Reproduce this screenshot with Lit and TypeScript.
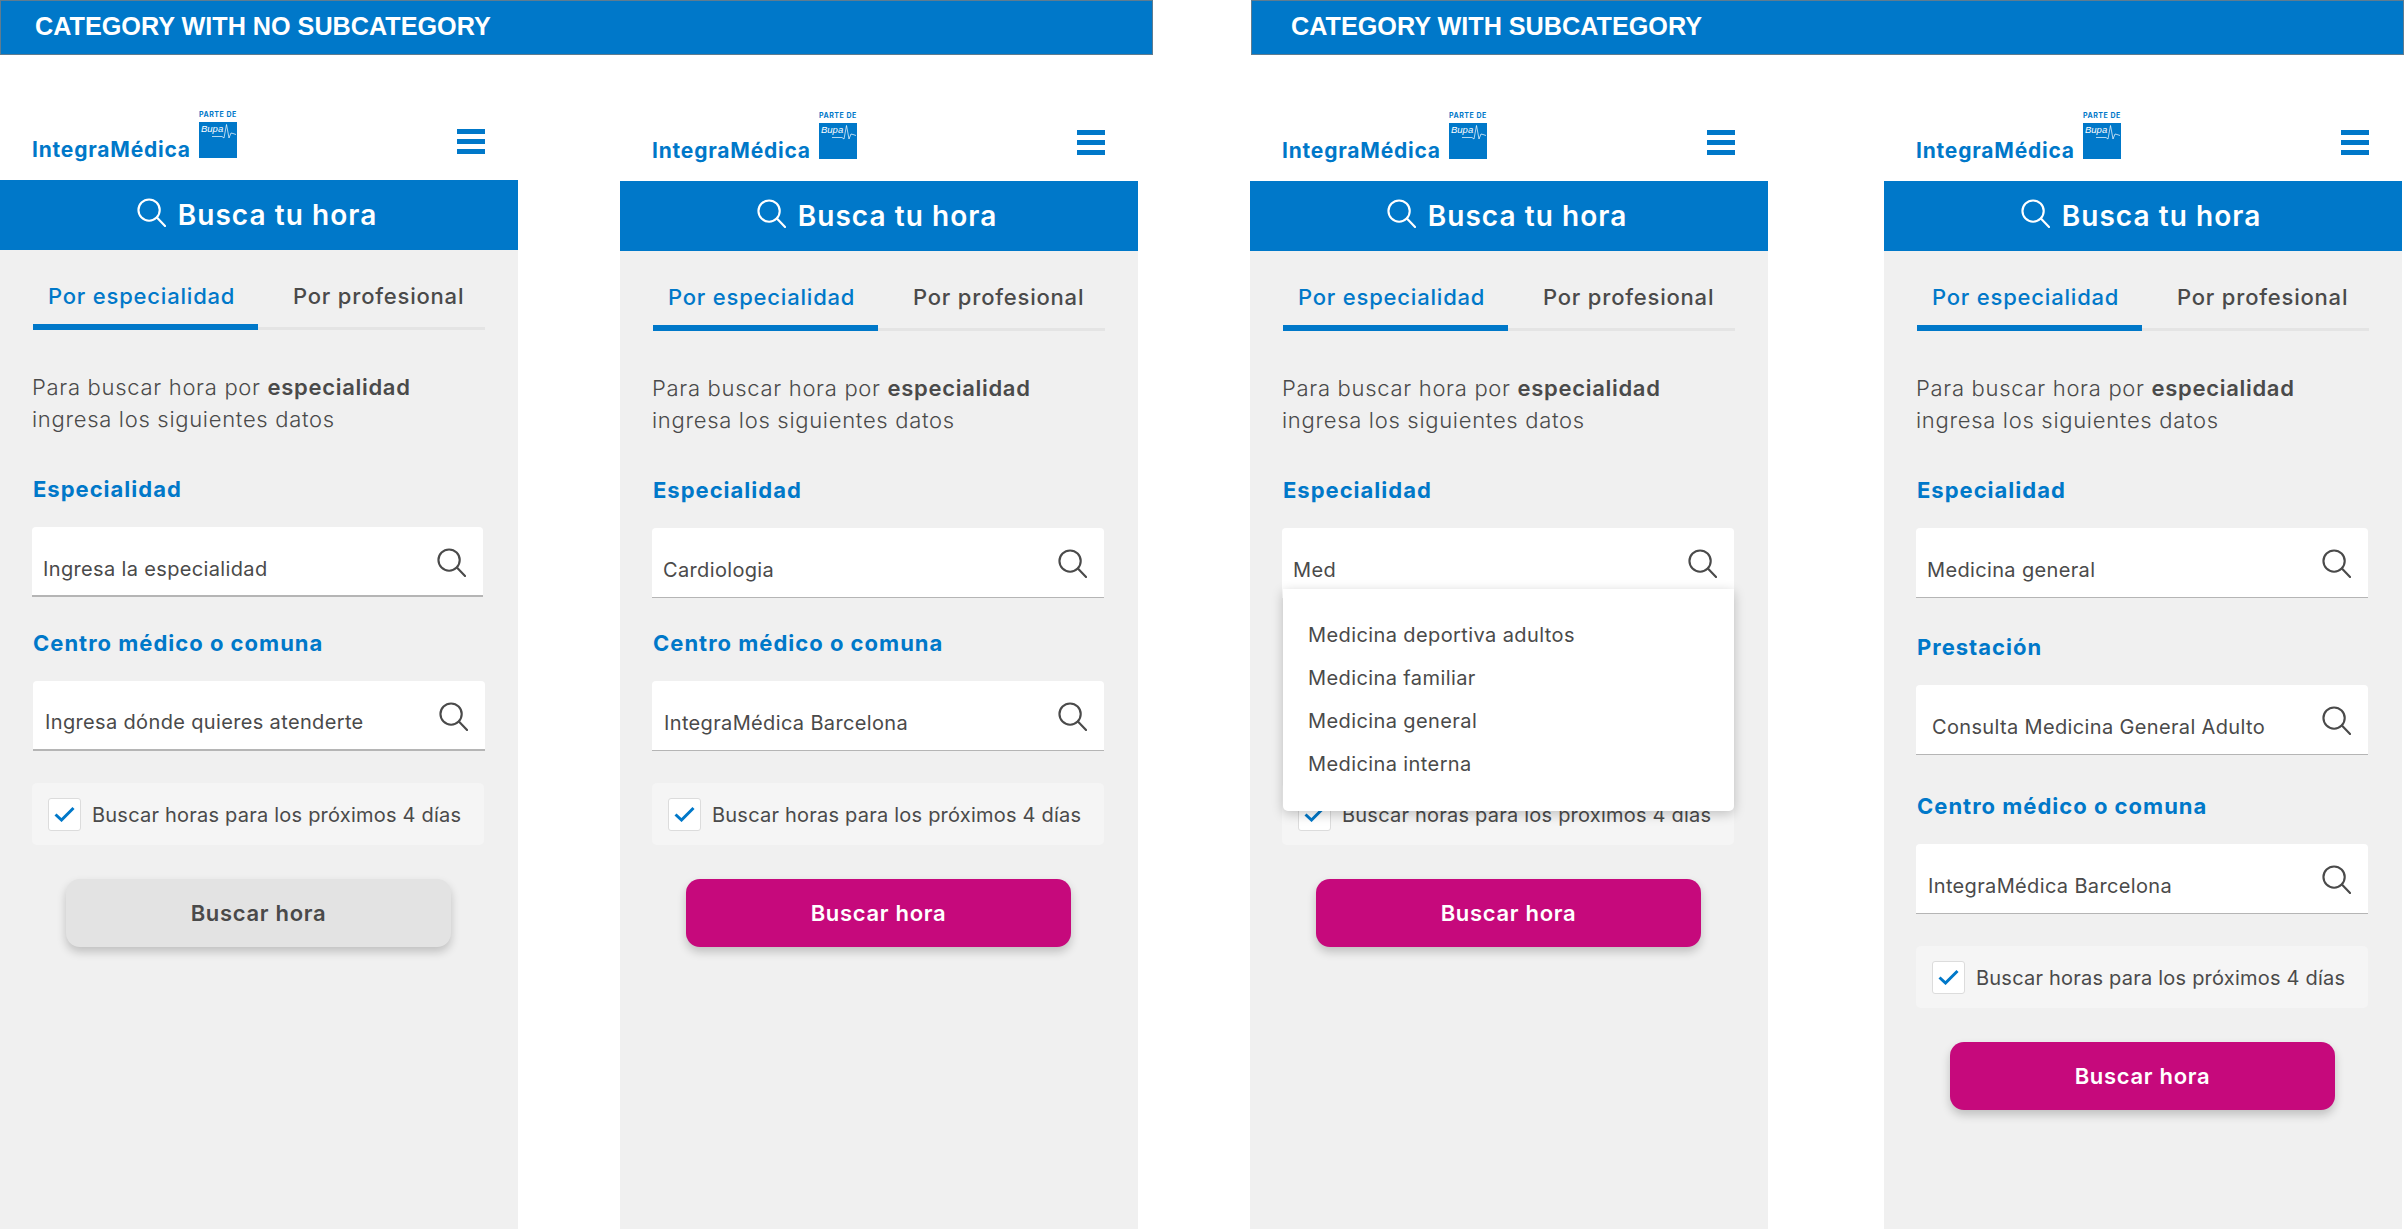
import { LitElement, html, css } from "lit";
import { customElement, property } from "lit/decorators.js";
import { classMap } from "lit/directives/class-map.js";

const lens = (cls: string) => html`<svg class=${cls} viewBox="0 0 30 30" fill="none" stroke="currentColor" stroke-width="2.2" stroke-linecap="round">
  <circle cx="12.5" cy="12.5" r="11"></circle><path d="M20.6 20.2 L29 29"></path></svg>`;

interface Field { label: string; value: string; cls?: string; ghost?: boolean }

@customElement("search-phone")
class SearchPhone extends LitElement {
  @property({ type: Array }) fields: Field[] = [];
  @property({ type: Boolean }) disabled = false;
  @property({ type: Boolean }) open = false;
  @property({ type: Boolean }) shifted = false;
  @property({ type: Boolean }) tall = false;

  static styles = css`
    :host { display: flex; flex-direction: column; width: 518px; font-family: Inter, "Open Sans", sans-serif; color: #4a4a4a; }
    .phone { display: flex; flex-direction: column; height: 100%; }
    .top { height: 125px; flex: none; display: flex; align-items: flex-end; justify-content: space-between; padding: 0 33px 0 32px; box-sizing: border-box; background: #fff; }
    .shifted .top { height: 126px; }
    .logo { display: flex; align-items: flex-end; gap: 8px; padding-bottom: 22px; color: #0078c9; }
    .wordmark { font-size: 21px; line-height: 24px; font-weight: 700; letter-spacing: 0.8px; margin-bottom: -4px; }
    .bupa { display: flex; flex-direction: column; align-items: center; width: 38px; }
    .parte { font-size: 7px; line-height: 8px; font-weight: 700; letter-spacing: .5px; margin-bottom: 3px; white-space: nowrap; }
    .square { display: block; width: 38px; height: 36px; }
    .burger { display: flex; flex-direction: column; gap: 5px; width: 28px; padding-bottom: 26px; }
    .burger span { height: 5px; background: #0078c9; }
    .hero { height: 70px; flex: none; background: #0078c9; color: #fff; display: flex; align-items: center; justify-content: center; gap: 12px; padding-right: 4px; }
    .hero-icon { width: 29px; height: 29px; margin-top: -5px; }
    .hero b { font-size: 28px; font-weight: 600; letter-spacing: 1.05px; }
    .body { flex: 1; background: #f0f0f0; padding: 0 33px 0 32px; display: flex; flex-direction: column; position: relative; }
    .tabs { height: 80px; flex: none; margin-left: 1px; display: grid; grid-template-columns: 225px 1fr; align-items: end; }
    .tab { display: flex; align-items: flex-start; font-size: 22px; line-height: 30px; height: 80px; box-sizing: border-box; font-weight: 500; letter-spacing: 0.8px; border-bottom: 3px solid #e4e4e4; padding: 31px 0 0 35px; }
    .tab.on { color: #0078c9; border-bottom: 6px solid #0078c9; padding-left: 15px; }
    .intro { margin: 41px 0 0; font-size: 22px; line-height: 32px; font-weight: 300; letter-spacing: 0.7px; }
    .intro b { font-weight: 600; }
    .label { font-size: 22px; line-height: 30px; font-weight: 700; letter-spacing: 1px; color: #0078c9; margin: 39px 0 0 1px; }
    .label.next { margin-top: 31px; }
    .shifted .label.next { margin-top: 30px; }
    .tall .label.n1 { margin-top: 34px; }
    .tall .label.n2 { margin-top: 36px; }
    .ghost { visibility: hidden; }
    .input { height: 70px; flex: none; margin: 23px 1px 0 0; background: #fff; border-radius: 4px 4px 0 0; border-bottom: 1px solid #b5b5b5; box-sizing: border-box; display: flex; align-items: flex-end; justify-content: space-between; padding: 0 17px 14px 11px; font-size: 20px; line-height: 26px; letter-spacing: .35px; }
    .disabled .input { border-bottom-width: 2px; padding-bottom: 13px; margin-right: 2px; }
    .input.near { padding-left: 12px; }
    .disabled .input.near { margin: 23px 0 0 1px; padding-bottom: 14px; }
    .input.plain { border-bottom-color: transparent; }
    .input.wide { padding-left: 16px; }
    .input-icon { width: 29px; height: 29px; align-self: flex-start; margin: 21px 0 0; flex: none; }
    .check { margin: 32px 1px 0 0; height: 62px; flex: none; background: #f5f5f5; border-radius: 5px; display: flex; align-items: center; gap: 11px; padding-left: 16px; font-size: 20px; letter-spacing: .22px; }
    .check-text { margin-top: 2px; }
    .box { width: 33px; height: 33px; background: #fff; border: 1.5px solid #dcdcdc; border-radius: 3px; box-sizing: border-box; display: flex; align-items: center; justify-content: center; }
    .box svg { width: 21px; height: 16px; }
    .cta { margin: 34px 0 0 34px; width: 385px; height: 68px; flex: none; border-radius: 14px; background: #c6097c; color: #fff; font-size: 22px; font-weight: 600; letter-spacing: .7px; box-shadow: 0 5px 10px rgba(0,0,0,.2); display: flex; align-items: center; justify-content: center; }
    .cta.off { background: #e3e3e3; color: #4a4a4a; }
    .menu { position: absolute; left: 33px; top: 338px; width: 451px; height: 222px; background: #fff; border-radius: 0 0 5px 5px; box-shadow: 0 3px 12px rgba(0,0,0,.22); box-sizing: border-box; padding: 25px 0 0 25px; font-size: 20px; line-height: 43px; letter-spacing: .4px; }
  `;

  render() {
    return html`<div class=${classMap({ phone: true, shifted: this.shifted, tall: this.tall, disabled: this.disabled })}>
      <div class="top">
        <div class="logo">
          <span class="wordmark">IntegraMédica</span>
          <div class="bupa">
            <span class="parte">PARTE DE</span>
            <svg class="square" viewBox="0 0 38 36">
              <rect width="38" height="36" fill="#0078c9"></rect>
              <text x="2" y="10" font-size="9.5" font-style="italic" font-family="Liberation Sans" fill="#fff">Bupa</text>
              <path d="M13 14.5H23L25 16 27.5 2.5 30 16 32 11 34 11.5 37 12.5" fill="none" stroke="#fff" stroke-width=".7"></path>
            </svg>
          </div>
        </div>
        <div class="burger"><span></span><span></span><span></span></div>
      </div>
      <div class="hero">${lens("hero-icon")}<b>Busca tu hora</b></div>
      <div class="body">
        <div class="tabs"><div class="tab on">Por especialidad</div><div class="tab">Por profesional</div></div>
        <p class="intro">Para buscar hora por <b>especialidad</b><br>ingresa los siguientes datos</p>
        ${this.fields.map((f, i) => html`
          <div class="label ${i > 0 ? `next n${i}` : ""} ${f.ghost ? "ghost" : ""}">${f.label}</div>
          <div class="input ${f.cls ?? ""} ${i > 0 ? "near" : ""} ${f.ghost ? "ghost" : ""}"><span>${f.value}</span>${lens("input-icon")}</div>`)}
        <div class="check"><span class="box"><svg viewBox="0 0 21 16" fill="none" stroke="#0078c9" stroke-width="3"><path d="M1.5 8.5 L7.5 14 L19.5 2"></path></svg></span><span class="check-text">Buscar horas para los próximos 4 días</span></div>
        <div class="cta ${this.disabled ? "off" : ""}">Buscar hora</div>
        ${this.open ? html`<div class="menu">
          <div>Medicina deportiva adultos</div><div>Medicina familiar</div><div>Medicina general</div><div>Medicina interna</div>
        </div>` : ""}
      </div>
    </div>`;
  }
}

@customElement("app-root")
class AppRoot extends LitElement {
  static styles = css`
    :host { display: block; width: 2404px; height: 1229px; overflow: hidden; background: #fff; }
    .root { display: flex; gap: 97px; height: 100%; }
    .group { width: 1153px; display: flex; flex-direction: column; }
    .group.right { width: 1154px; }
    .banner { height: 55px; flex: none; box-sizing: border-box; background: #0078c9; border: 1.5px solid #5f7c90; color: #fff; font: 700 25.2px "Liberation Sans", Arial, sans-serif; display: flex; align-items: center; padding-left: 34px; padding-bottom: 2px; }
    .phones { flex: 1; display: flex; gap: 102px; }
    .right .phones { gap: 116px; }
    .right .banner { margin-left: 1px; padding-left: 39px; }
  `;

  render() {
    const centro = "Centro médico o comuna";
    const esp = "Especialidad";
    return html`<div class="root">
      <section class="group">
        <div class="banner">CATEGORY WITH NO SUBCATEGORY</div>
        <div class="phones">
          <search-phone disabled .fields=${[{ label: esp, value: "Ingresa la especialidad" }, { label: centro, value: "Ingresa dónde quieres atenderte" }]}></search-phone>
          <search-phone shifted .fields=${[{ label: esp, value: "Cardiologia" }, { label: centro, value: "IntegraMédica Barcelona" }]}></search-phone>
        </div>
      </section>
      <section class="group right">
        <div class="banner">CATEGORY WITH SUBCATEGORY</div>
        <div class="phones">
          <search-phone shifted open .fields=${[{ label: esp, value: "Med", cls: "plain" }, { label: centro, value: "", ghost: true }]}></search-phone>
          <search-phone shifted tall .fields=${[{ label: esp, value: "Medicina general" }, { label: "Prestación", value: "Consulta Medicina General Adulto", cls: "wide" }, { label: centro, value: "IntegraMédica Barcelona" }]}></search-phone>
        </div>
      </section>
    </div>`;
  }
}
